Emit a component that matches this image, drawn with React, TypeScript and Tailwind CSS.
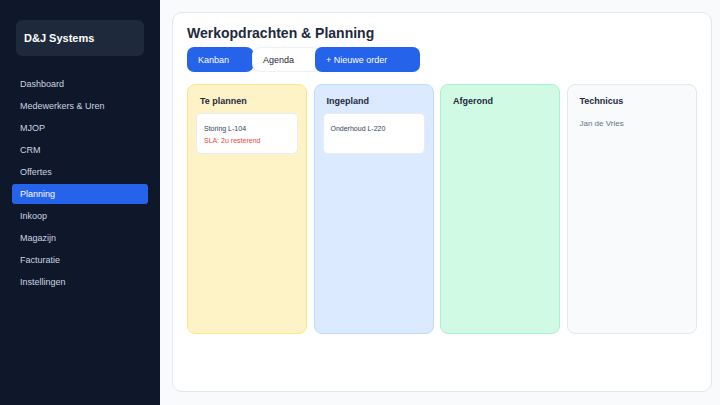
const navItems = [
  "Dashboard",
  "Medewerkers & Uren",
  "MJOP",
  "CRM",
  "Offertes",
  "Planning",
  "Inkoop",
  "Magazijn",
  "Facturatie",
  "Instellingen",
];

const columns = [
  {
    title: "Te plannen",
    box: "bg-[#fef3c7] border-[#fde68a] w-[120px]",
    cards: [{ name: "Storing L-104", sla: "SLA: 2u resterend" }],
  },
  {
    title: "Ingepland",
    box: "bg-[#dbeafe] border-[#bfdbfe] w-[120px]",
    cards: [{ name: "Onderhoud L-220", sla: "" }],
  },
  {
    title: "Afgerond",
    box: "bg-[#d1fae5] border-[#a7f3d0] w-[120px]",
    cards: [],
  },
];

export default function App() {
  return (
    <div className="flex h-[405px] w-[720px] overflow-hidden bg-[#f8fafc] font-['Liberation_Sans',Arial,sans-serif]">
      {/* Sidebar */}
      <aside className="w-[160px] shrink-0 bg-[#0f172a] px-3 pt-5">
        <div className="mx-1 flex h-9 items-center rounded-md bg-[#1e293b] px-2 text-[11px] font-bold text-white">
          D&amp;J Systems
        </div>
        <nav className="mt-[18px] flex flex-col gap-[2px]">
          {navItems.map((item) => (
            <div
              key={item}
              className={
                item === "Planning"
                  ? "flex h-5 items-center rounded-[3px] bg-[#2563eb] px-2 pt-[2px] text-[9px] text-white"
                  : "flex h-5 items-center px-2 pt-[2px] text-[9px] text-[#cbd5e1]"
              }
            >
              {item}
            </div>
          ))}
        </nav>
      </aside>

      {/* Main */}
      <main className="flex-1 pt-3 pl-3 pr-2 pb-[13px]">
        <div className="h-full rounded-[10px] border border-[#e2e8f0] bg-white px-[14px] pt-[11px]">
          <h1 className="text-[14px] font-bold leading-[18px] text-[#1e293b]">
            Werkopdrachten &amp; Planning
          </h1>

          <div className="mt-[5px] flex h-[25px] text-[9px]">
            <button className="w-[67px] rounded-l-[7px] rounded-r-[8px] bg-[#2563eb] pl-[11px] pt-[2px] text-left text-white">
              Kanban
            </button>
            <button className="-ml-[2px] w-[70px] rounded-[8px] border border-[#eef2f7] bg-white pl-[10px] pt-[2px] text-left text-[#1e293b]">
              Agenda
            </button>
            <button className="-ml-[7px] w-[105px] rounded-[7px] bg-[#2563eb] pl-[11px] pt-[2px] text-left text-white">
              + Nieuwe order
            </button>
          </div>

          <div className="mt-3 flex h-[250px] gap-[6.5px]">
            {columns.map((col) => (
              <div
                key={col.title}
                className={`rounded-[8px] border px-2 pt-[10px] ${col.box}`}
              >
                <div className="pl-[4px] text-[9px] font-bold leading-[12px] text-[#1e293b]">
                  {col.title}
                </div>
                <div className="mt-[6px] flex flex-col gap-2">
                  {col.cards.map((card) => (
                    <div
                      key={card.name}
                      className="h-[41px] rounded-[5px] border border-[#e8edf3] bg-white px-[7px] pt-[10px]"
                    >
                      <div className="text-[7px] leading-[10px] text-[#334155]">
                        {card.name}
                      </div>
                      {card.sla && (
                        <div className="mt-[2px] text-[7px] leading-[10px] text-[#ef4444]">
                          {card.sla}
                        </div>
                      )}
                    </div>
                  ))}
                </div>
              </div>
            ))}
            <div className="w-[130px] rounded-[8px] border border-[#e2e8f0] bg-[#f8fafc] px-3 pt-[10px]">
              <div className="text-[9px] font-bold leading-[12px] text-[#1e293b]">Technicus</div>
              <div className="mt-[12px] text-[8px] leading-[10px] text-[#64748b]">Jan de Vries</div>
            </div>
          </div>
        </div>
      </main>
    </div>
  );
}
